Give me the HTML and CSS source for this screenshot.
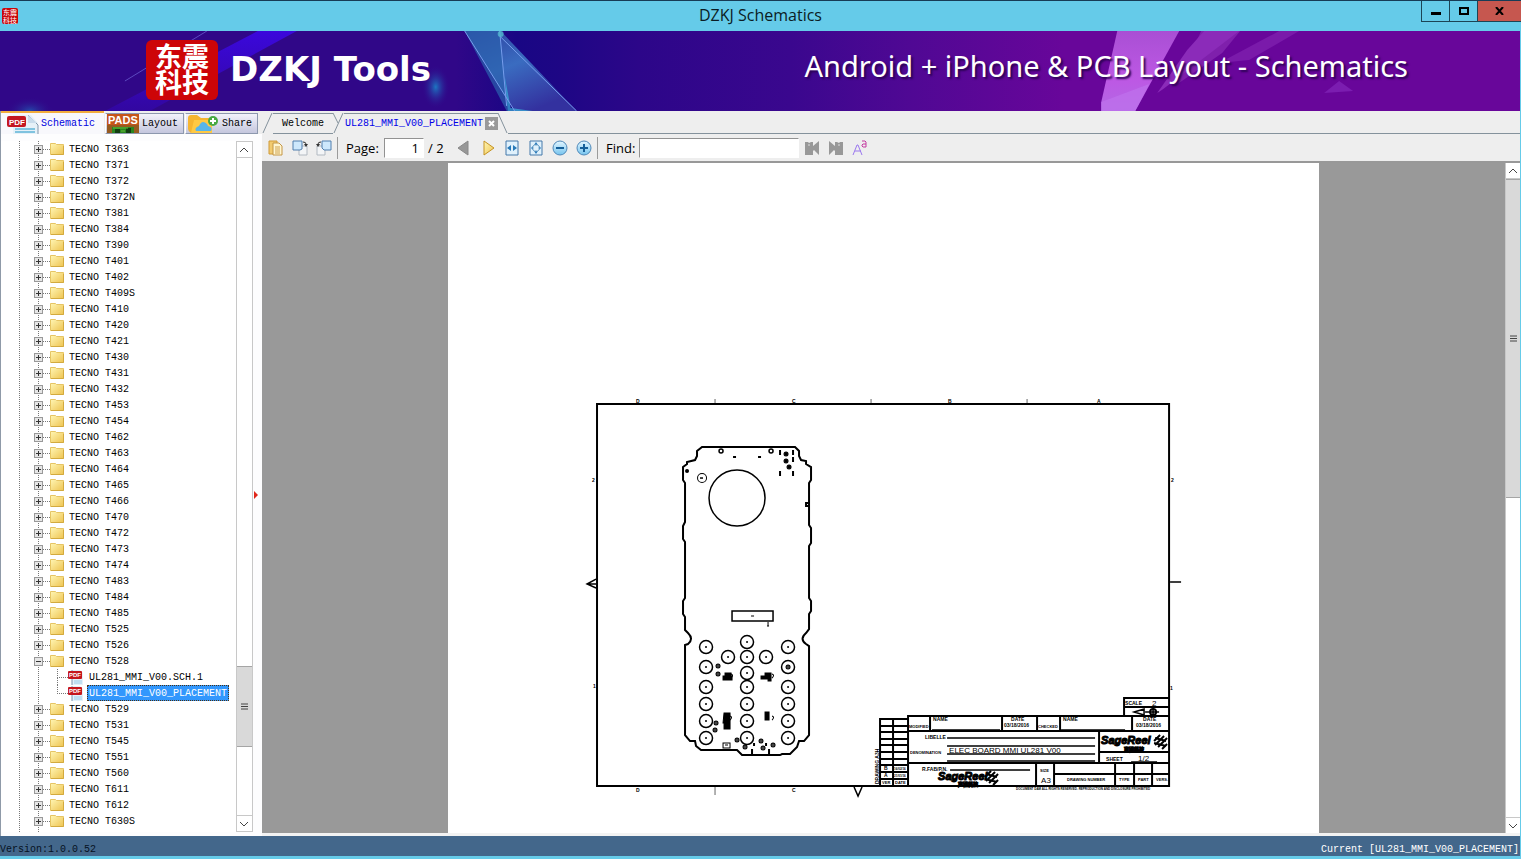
FILE: index.html
```html
<!DOCTYPE html>
<html lang="en">
<head>
    <meta charset="UTF-8">
    <meta name="viewport" content="width=device-width, initial-scale=1.0">
    <title>DZKJ Schematics</title>
    <link rel="stylesheet" href="styles.css">
</head>
<body>
    <!-- Shared icons -->
    <svg class="sprite" aria-hidden="true">
        <defs>
            <linearGradient id="gold" x2="1" y2="1"><stop offset="0" stop-color="#fff6b4"/><stop offset="1" stop-color="#eec452"/></linearGradient>
            <linearGradient id="ball" x2="0" y2="1"><stop offset="0" stop-color="#e4f6ff"/><stop offset="1" stop-color="#74c3ee"/></linearGradient>
        </defs>
        <symbol id="folder" viewBox="0 0 14 13">
            <path d="M.5 .5h5l1 1h7v10H.5z" fill="url(#gold)" stroke="#e6c564"/>
            <path d="M1 11.5h12.5V3" fill="none" stroke="#d3aa3e"/>
        </symbol>
    </svg>

    <header class="title-bar">
        <span class="app-icon"><span>东震</span><span>科技</span></span>
        <h1>DZKJ Schematics</h1>
        <div class="window-buttons">
            <button aria-label="Minimize"><svg width="10" height="10"><path d="M0 6h10v3H0z"/></svg></button>
            <button aria-label="Maximize"><svg width="10" height="8"><path d="M1 1h8v6H1z" fill="none" stroke="#000" stroke-width="2"/></svg></button>
            <button class="close" aria-label="Close"><svg width="9" height="8"><path d="M1 0l7 8M8 0L1 8" stroke="#000" stroke-width="2"/></svg></button>
        </div>
    </header>

    <section class="banner">
        <svg class="banner-art" viewBox="0 0 1521 80" preserveAspectRatio="none" aria-hidden="true">
            <defs>
                <linearGradient id="sky"><stop offset="0" stop-color="#300788"/><stop offset=".3" stop-color="#300788"/><stop offset=".34" stop-color="#190684"/><stop offset=".37" stop-color="#1e0685"/><stop offset=".42" stop-color="#2c0689"/><stop offset=".52" stop-color="#3a078e"/><stop offset=".6" stop-color="#500894"/><stop offset=".7" stop-color="#68069a"/><stop offset="1" stop-color="#68069a"/></linearGradient>
                <linearGradient id="beam" x2="0" y2="1"><stop offset="0" stop-color="#3b08dc"/><stop offset="1" stop-color="#3207a0"/></linearGradient>
                <linearGradient id="facet" x2=".6" y2="1"><stop offset="0" stop-color="#2c3f9f"/><stop offset=".5" stop-color="#3a6cc0"/><stop offset="1" stop-color="#33319f"/></linearGradient>
                <linearGradient id="pink" x2="0" y2="1"><stop offset="0" stop-color="#a94fd4"/><stop offset=".6" stop-color="#bd58e4"/><stop offset="1" stop-color="#b368e4"/></linearGradient>
                <radialGradient id="glow"><stop offset="0" stop-color="#1d76c2"/><stop offset="1" stop-color="#300788" stop-opacity="0"/></radialGradient>
            </defs>
            <rect width="1521" height="80" fill="url(#sky)"/>
            <path d="M258 0h39L150 80h-45z" fill="url(#beam)"/>
            <path d="M207 0L125 50" stroke="#5c4ac0"/>
            <ellipse cx="436" cy="56" rx="14" ry="22" fill="url(#glow)"/>
            <ellipse cx="30" cy="80" rx="24" ry="14" fill="url(#glow)" opacity=".6"/>
            <path d="M465 0h36l76 80h-62z" fill="url(#facet)"/>
            <path d="M500 0l8 80h-1L465 0z" fill="#2b62ae" opacity=".7"/>
            <path d="M505 45l6 32 22 3h-25z" fill="#3ab3da" opacity=".7"/>
            <path d="M465 0l50 80M500 0l7 75M500 5l77 75" stroke="#759dec" fill="none"/>
            <circle cx="501" cy="3" r="3" fill="#52b9d0" opacity=".8"/>
            <path d="M1202 0h39l-18 22-46 32z" fill="#7f20ac"/>
            <path d="M1280 0h20l-50 29-30 3z" fill="#7a1aaa"/>
            <path d="M1205 0h35l-76 58-6 4 30-43z" fill="#8b2bb9"/>
            <path d="M1118 0h62l-44 80h-34v-9z" fill="url(#pink)"/>
            <path d="M1136 80l14-27-48 18v9z" fill="#bf72ec" opacity=".7"/>
            <path d="M1325 62l15-12 14 10z" fill="#7b1db0"/>
        </svg>
        <div class="logo"><span>东震</span><span>科技</span></div>
        <strong class="brand">DZKJ Tools</strong>
        <p class="slogan">Android + iPhone &amp; PCB Layout - Schematics</p>
    </section>

    <main class="workspace">
        <aside class="sidebar">
            <nav class="side-tabs">
                <button class="side-tab active">
                    <svg width="34" height="20" viewBox="0 0 34 20" aria-hidden="true">
                        <path d="M7 1h18l7 8v11H7z" fill="#e6f1f8"/><path d="M22 1l10 10v9" fill="none" stroke="#8196aa"/>
                        <path d="M22 1v8h9z" fill="#c9dceb"/><path d="M9 15h20M9 18h20" stroke="#80c3df" stroke-width="2"/>
                        <rect x="1" y="2" width="19" height="11" rx="2" fill="#c41620"/><text x="3" y="11" class="pdf-mark big">PDF</text>
                    </svg>
                    Schematic
                </button>
                <button class="side-tab">
                    <svg width="32" height="19" viewBox="0 0 32 19" aria-hidden="true">
                        <path d="M0 0h32v19H0z" fill="#c65519"/><path d="M0 11h32v8H0z" fill="#965a20"/>
                        <path d="M5 13h22v6H5z" fill="#29851f"/><path d="M8 15h5v4H8zM19 14h5v5h-5z" fill="#123d10"/><path d="M6 14h15M14 17h4" stroke="#66bc3c"/>
                        <text x="1" y="10" class="pads-mark">PADS</text>
                    </svg>
                    Layout
                </button>
                <button class="side-tab">
                    <svg width="32" height="19" viewBox="0 0 32 19" aria-hidden="true">
                        <path d="M1 4q0-3 3-3h6l4 3h11v15H4q-3-2-3-4z" fill="#f6b530"/><path d="M7 6h18v13H4z" fill="#ffc943"/>
                        <path d="M9 17q-2-3 3-5 3-7 8-2l1 2q5 1 3 5z" fill="#57b5eb"/>
                        <circle cx="26" cy="7" r="5" fill="#48a942"/><path d="M23 7h6M26 4v6" stroke="#fff" stroke-width="2"/>
                    </svg>
                    Share
                </button>
            </nav>
            <div class="side-body">
                <ul class="tree" id="tree">
                    <!-- filled by the script -->
                </ul>
                <div class="scrollbar tree-scroll">
                    <button aria-label="Scroll up"><svg width="9" height="6"><path d="M0 5l4-4 4 4" class="chevron"/></svg></button>
                    <div class="track"><div class="thumb"><svg width="7" height="7"><path d="M0 1h7M0 3.500h7M0 6h7" class="grip"/></svg></div></div>
                    <button aria-label="Scroll down"><svg width="9" height="6"><path d="M0 1l4 4 4-4" class="chevron"/></svg></button>
                </div>
                <div class="splitter"><svg width="4" height="8"><path d="M0 0l4 4-4 4z" fill="#e0261a"/></svg></div>
            </div>
        </aside>

        <section class="content">
            <nav class="doc-tabs">
                <svg width="11" height="21" aria-hidden="true"><path d="M1 20L10 0" class="tab-edge"/></svg>
                <button class="doc-tab">Welcome</button>
                <svg width="11" height="21" aria-hidden="true"><path d="M0 0l5 10M1 20L10 0" class="tab-edge"/></svg>
                <div class="doc-tab active">
                    <button>UL281_MMI_V00_PLACEMENT</button>
                    <button class="tab-close" aria-label="Close tab"><svg width="7" height="7"><path d="M1 1l5 5M6 1L1 6" stroke="#fff" stroke-width="2"/></svg></button>
                </div>
                <svg width="10" height="21" aria-hidden="true"><path d="M0 0l9 20" class="tab-edge"/></svg>
                <span class="tabs-rest"></span>
            </nav>

            <div class="toolbar">
                <button class="tool" aria-label="Open"><svg width="16" height="16"><path d="M1 1h8v13H1z" fill="#f2cb70" stroke="#cf9a38"/><path d="M5 3h6l3 3v9H5z" fill="#fff6d2" stroke="#c49645"/><path d="M7 7h5M7 9h5M7 11h5M7 13h5" stroke="#cfa24e"/></svg></button>
                <button class="tool" aria-label="Rotate right"><svg width="16" height="16"><path d="M7 6h8v9H7z" fill="#f3f5f7" stroke="#b2b9c1"/><path d="M1 1h9v8l-2 1H1z" fill="#cde8fc" stroke="#517fae"/><path d="M11 2q3 0 3 2" fill="none" stroke="#333"/><path d="M12 4h4l-2 3z" fill="#333"/></svg></button>
                <button class="tool" aria-label="Rotate left"><svg width="16" height="16"><path d="M1 6h8v9H1z" fill="#f3f5f7" stroke="#b2b9c1"/><path d="M6 1h9v9H8L6 8z" fill="#cde8fc" stroke="#517fae"/><path d="M5 2Q2 2 2 4" fill="none" stroke="#333"/><path d="M0 4h4L2 7z" fill="#333"/></svg></button>
                <span class="divider"></span>
                <label for="page-input" class="page-label">Page:</label>
                <input type="text" id="page-input" value="1">
                <span class="page-total">/ 2</span>
                <button class="tool" aria-label="Previous page"><svg width="16" height="16"><path d="M12 1v14L2 8z" fill="#979797" stroke="#888"/></svg></button>
                <button class="tool" aria-label="Next page"><svg width="16" height="16"><path d="M4 1v14l10-7z" fill="url(#gold)" stroke="#c59324"/></svg></button>
                <button class="tool" aria-label="Fit width"><svg width="14" height="16"><path d="M1 1h12v14H1z" fill="#e0f1fc" stroke="#4578aa"/><path d="M6 5v6L2 8zM8 5v6l4-3z" fill="#2879b8"/></svg></button>
                <button class="tool" aria-label="Fit page"><svg width="14" height="16"><path d="M1 1h12v14H1z" fill="#e0f1fc" stroke="#4578aa"/><path d="M7 2l2 3H5zM7 14l2-3H5zM2 8l2-2v4zM12 8l-2-2v4z" fill="#2879b8"/><path d="M4 6l1-1h4l1 1v4l-1 1H5l-1-1z" fill="none" stroke="#7ba9cc"/></svg></button>
                <button class="tool" aria-label="Zoom out"><svg width="16" height="16"><circle cx="8" cy="8" r="7" fill="url(#ball)" stroke="#5089b9"/><path d="M4 8h8" stroke="#155f99" stroke-width="2"/></svg></button>
                <button class="tool" aria-label="Zoom in"><svg width="16" height="16"><circle cx="8" cy="8" r="7" fill="url(#ball)" stroke="#5089b9"/><path d="M4 8h8M8 4v8" stroke="#155f99" stroke-width="2"/></svg></button>
                <span class="divider"></span>
                <label for="find-input" class="find-label">Find:</label>
                <input type="text" id="find-input">
                <button class="tool" aria-label="Find previous"><svg width="16" height="16"><path d="M1 2h3l1 1 2-1h2v4l6-5v14l-5-5-1 1v4H1z" fill="#989898"/><path d="M4 5h2" stroke="#ddd"/></svg></button>
                <button class="tool" aria-label="Find next"><svg width="16" height="16"><path d="M15 2h-3l-1 1-2-1H7v4L1 1v14l5-5 1 1v4h8z" fill="#989898"/><path d="M10 5h2" stroke="#ddd"/></svg></button>
                <button class="tool" aria-label="Match case"><svg width="16" height="16"><path d="M1 15L5 5h1l4 10M3 11h6" fill="none" stroke="#9b78ee"/><path d="M10 1h3l1 1v5M14 4h-3l-1 1v1l1 1h3" fill="none" stroke="#c43aa0"/></svg></button>
            </div>

            <div class="viewer">
                <div class="canvas">
                    <div class="sheet">
                        <!-- Placement drawing, sheet 1 -->
                        <svg class="drawing" viewBox="448 163 870 671" id="drawing">
                            <!-- frame -->
                            <path d="M597 404h572v382H597z" stroke-width="2"/>
                            <path d="M715 399v4M871 399v4M1027 399v4M715 787v8" stroke="#666"/>
                            <path d="M596 579l-9 5 9 4M587 584h9M1170 582h11M854 787l4 9 4-9" stroke-width="1.500"/>
                            <g class="zone">
                                <text x="636" y="403">D</text><text x="792" y="403">C</text><text x="948" y="403">B</text><text x="1097" y="403">A</text>
                                <text x="636" y="792">D</text><text x="792" y="792">C</text>
                                <text x="592" y="482">2</text><text x="593" y="688">1</text><text x="1171" y="482">2</text><text x="1170" y="690">1</text>
                            </g>
                            <!-- board outline -->
                            <path stroke-width="2" d="M702 447H795L799 451V456L801 460L806 461V464L811 467V480L809 483V525L811 528V543L809 546V598L811 601V611L809 614V629L806 633Q799 639 806 644L809 646V735L804 741H799L797 747L790 754H782L780 755H742L737 750H701L696 746L695 741H690L685 735V645L688 644Q694 639 688 633L685 630V617L683 614V601L685 598V542L683 539V526L685 522V483L683 480V467L687 464V462L695 460L697 456V451Z"/>
                            <path d="M809 503h-3v3h3" stroke-width="2"/>
                            <circle cx="737" cy="498" r="28" stroke-width="1.500"/>
                            <circle cx="702" cy="478" r="4.500"/><path d="M700 478h3" stroke-width="1.500"/>
                            <circle cx="721" cy="451" r="2" stroke-width="1.500"/><circle cx="771" cy="451" r="2" stroke-width="1.500"/>
                            <circle cx="687" cy="471" r="1" stroke-width="2"/>
                            <path d="M733 457h3M758 457h3" stroke-width="2"/>
                            <path d="M780 450v5M793 450v5M793 457v5M780 471v5M793 471v5" stroke-width="2"/>
                            <g fill="#000"><circle cx="786" cy="454" r="2"/><circle cx="786" cy="461" r="2"/><circle cx="789" cy="467" r="2"/></g>
                            <path d="M732 611h41v10h-41z" stroke-width="1.500"/><path d="M751 616h3M768 622v4M767 626h2"/>
                            <!-- keys are added by the script -->
                            <g id="keys"></g>
                            <path d="M725 673h6v3h1v4h-9v-4h2zM765 673h6v8h-3v-2h-7v-3h4zM724 713h6v16h-6v-6h-1zM765 712h4v8h-4z" fill="#000"/>
                            <path d="M731 674q3 1 0 4M772 674q3 1 0 4M730 716q3 1 0 4M772 716q3 1 0 4M723 743h7v5h-7zM725 745h3"/>
                            <g class="vias"><circle cx="718" cy="666" r="2"/><circle cx="718" cy="674" r="2"/><circle cx="716" cy="723" r="2"/><circle cx="715" cy="730" r="2"/><circle cx="737" cy="740" r="2"/><circle cx="745" cy="747" r="2"/><circle cx="761" cy="741" r="2"/><circle cx="763" cy="748" r="2"/><circle cx="773" cy="745" r="2"/><circle cx="788" cy="667" r="2"/></g>
                            <path d="M752 749v5M769 749v5M754 743v3M766 743v3" stroke-width="2"/>

                            <!-- title block -->
                            <path stroke-width="2" d="M880 786v-67h28M893 719v67M908 786v-70h261M880 726h28M880 732h28M880 739h28M880 745h28M880 752h28M880 759h28M880 765h28M880 772h28M880 779h28M908 731h261M908 763h261M930 716v15M1002 716v15M1037 716v15M1060 716v15M1132 716v15M1099 731v32M1099 752h70M1036 763v23M1054 763v23M1054 774h115M1115 763v23M1134 763v23M1152 763v23M1124 716v-18h45M1124 707h45"/>
                            <path stroke-width="1.500" d="M932 730h68M1061 730h64M947 738h148M947 746h148M947 754h148M947 761h148M950 770h80M1131 762h26"/>
                            <path d="M1134 712l10-3v6zM1145 712h14M1153 707v9" stroke-width="1.500"/><circle cx="1153" cy="712" r="3" stroke-width="2"/>
                            <text class="sage" x="1101" y="744">SageReel</text>
                            <text class="sage small" x="1124" y="751">声锐科技</text>
                            <path class="sage-mark" d="M1154 741l6-6M1155 745l9-9M1158 747l9-9M1162 749l5-5M1155 738l11 3M1154 743l12 3"/>
                            <text class="sage" x="938" y="780">SageReel</text>
                            <text class="sage small" x="958" y="786">声锐科技</text>
                            <path class="sage-mark" d="M985 777l6-6M986 781l9-9M989 783l9-9M993 785l5-5M986 774l11 3M985 779l12 3"/>
                            <g class="tiny">
                                <text x="1125" y="705">SCALE</text><text x="933" y="721">NAME</text><text x="1063" y="721">NAME</text>
                                <text x="1011" y="721">DATE</text><text x="1143" y="721">DATE</text>
                                <text x="1004" y="727">03/18/2016</text><text x="1136" y="727">03/18/2016</text>
                                <text x="925" y="739">LIBELLE</text>
                                <text x="922" y="771">R.FAB/P.N.</text><text x="1106" y="761">SHEET</text>
                                <text x="884" y="770">B</text><text x="884" y="777">A</text>
                                <text transform="translate(879 784) rotate(-90)">DRAWING A3H</text>
                            </g>
                            <g class="tiny dense">
                                <text x="910" y="754">DENOMINATION</text><text x="882" y="784">VER</text><text x="895" y="784">DATE</text>
                                <text x="909" y="728">MODIFIED</text><text x="1038" y="728">CHECKED</text><text x="1040" y="772">SIZE</text>
                                <text x="1067" y="781">DRAWING NUMBER</text><text x="1119" y="781">TYPE</text><text x="1138" y="781">PART</text><text x="1156" y="781">VERS.</text>
                            </g>
                            <g class="tiny note">
                                <text x="894" y="770">16/02/16</text><text x="894" y="777">21/01/16</text>
                                <text x="1016" y="790">DOCUMENT DAM ALL RIGHTS RESERVED. REPRODUCTION AND DISCLOSURE PROHIBITED</text>
                            </g>
                            <g class="value"><text x="949" y="753">ELEC BOARD MMI UL281 V00</text><text x="1138" y="761">1/2</text><text x="1041" y="783">A3</text><text x="1152" y="706">2</text></g>
                        </svg>
                    </div>
                </div>
                <div class="scrollbar page-scroll">
                    <button aria-label="Scroll up"><svg width="9" height="6"><path d="M0 5l4-4 4 4" class="chevron"/></svg></button>
                    <div class="track"><div class="thumb"><svg width="7" height="7"><path d="M0 1h7M0 3.500h7M0 6h7" class="grip"/></svg></div></div>
                    <button aria-label="Scroll down"><svg width="9" height="6"><path d="M0 1l4 4 4-4" class="chevron"/></svg></button>
                </div>
            </div>
        </section>
    </main>

    <footer class="status-bar">
        <span>Version:1.0.0.52</span>
        <span class="current">Current [UL281_MMI_V00_PLACEMENT]</span>
    </footer>

    <script>
        const models = ["T363", "T371", "T372", "T372N", "T381", "T384", "T390", "T401", "T402", "T409S", "T410",
            "T420", "T421", "T430", "T431", "T432", "T453", "T454", "T462", "T463", "T464", "T465", "T466", "T470",
            "T472", "T473", "T474", "T483", "T484", "T485", "T525", "T526", "T528", "T529", "T531", "T545", "T551",
            "T560", "T611", "T612", "T630S"];
        // Files inside the open folder
        const files = { T528: ["UL281_MMI_V00.SCH.1", "UL281_MMI_V00_PLACEMENT"] };
        const current = "UL281_MMI_V00_PLACEMENT";
        const pdfIcon = `<svg class="pdf" viewBox="0 0 15 16" aria-hidden="true">
            <path d="M4 1h8l3 3v12H4z" fill="#e3f1fa"/><path d="M6 12h8M6 14h8" stroke="#9accea"/>
            <path d="M4 16V1" stroke="#7c94ae"/><rect y="2" width="14" height="8" rx="1" fill="#c5161d"/>
            <text x="1" y="8" class="pdf-mark">PDF</text></svg>`;

        function showTree() {
            let html = "";
            models.forEach(model => {
                const open = files[model];
                html += `<li><div class="node"><button class="expander${open ? " open" : ""}" aria-label="Toggle ${model}"></button>
                    <svg class="folder"><use href="#folder"/></svg><a href="#">TECNO ${model}</a></div>`;
                if (open) {
                    html += "<ul>" + open.map(file => `<li class="file">${pdfIcon}
                        <a href="#"${file === current ? ' class="selected"' : ""}>${file}</a></li>`).join("") + "</ul>";
                }
                html += "</li>";
            });
            document.getElementById("tree").innerHTML = html;
        }

        // Round keys of the keypad, column by column
        function drawKeys() {
            const columns = [
                [706, [647, 667, 687, 704, 721, 738]],
                [728, [657]],
                [747, [642, 657, 673, 687, 704, 721, 738]],
                [766, [657]],
                [788, [647, 667, 687, 704, 721, 738]]
            ];
            document.getElementById("keys").innerHTML = columns.map(([x, ys]) =>
                ys.map(y => `<circle cx="${x}" cy="${y}" r="6.500"/><circle cx="${x}" cy="${y}" r="1" class="dot"/>`).join("")
            ).join("");
        }

        showTree();
        drawKeys();
    </script>
</body>
</html>
```
FILE: styles.css
```css
*,
*::before,
*::after {
    box-sizing: border-box;
}
body {
    margin: 0;
    height: 100vh;
    display: flex;
    flex-direction: column;
    overflow: hidden;
    background-color: #65cbe9;
    border-bottom: 3px solid #65cbe9;
    font-family: "Liberation Mono", monospace;
    font-size: 10px;
    color: #000;
}
button {
    padding: 0;
    border: none;
    background: none;
    font: inherit;
    color: inherit;
}
a {
    color: inherit;
    text-decoration: none;
}
svg {
    display: block;
    flex-shrink: 0;
}
.sprite {
    position: absolute;
    width: 0;
    height: 0;
}

/* Title bar */
.title-bar {
    height: 31px;
    flex-shrink: 0;
    display: grid;
    grid-template-columns: 1fr auto 1fr;
    align-items: center;
    border-top: 1px solid #173c56;
}
.title-bar h1 {
    margin: 0;
    padding-bottom: 2px;
    font: 16px/26px "Open Sans", sans-serif;
    color: #0b1c24;
}
.app-icon {
    width: 16px;
    height: 16px;
    margin-left: 2px;
    border-radius: 2px;
    background-color: #c9060a;
    color: #fff;
    font: 7px/8px "Noto Sans CJK SC", sans-serif;
    text-align: center;
}
.app-icon span,
.logo span {
    display: block;
}
.window-buttons {
    display: flex;
    align-self: start;
    justify-self: end;
}
.window-buttons button {
    width: 28px;
    height: 21px;
    display: flex;
    align-items: center;
    justify-content: center;
    border: 1px solid #1c4455;
    border-top: none;
    border-right: none;
}
.window-buttons .close {
    width: 44px;
    background-color: #c6574f;
}

/* Banner */
.banner {
    position: relative;
    height: 80px;
    flex-shrink: 0;
    display: flex;
    align-items: center;
    padding: 0 112px 2px 146px;
    margin-right: 1px;
    color: #fff;
    background-color: #300788;
}
.banner-art {
    position: absolute;
    inset: 0;
    width: 100%;
    height: 100%;
}
.logo,
.brand,
.slogan {
    position: relative;
}
.logo {
    width: 72px;
    height: 60px;
    padding: 3px 0;
    border-radius: 6px;
    background-color: #cd0508;
    font: bold 27px/26px "Noto Sans CJK SC", sans-serif;
    text-align: center;
}
.brand {
    margin: 0 0 2px 12px;
    font: bold 34px/40px "DejaVu Sans", sans-serif;
}
.slogan {
    margin: 0 0 8px auto;
    font: 29px/36px "Noto Sans", sans-serif;
    text-shadow: 2px 2px 2px #2c0355;
}

/* Workspace */
.workspace {
    flex: 1;
    min-height: 0;
    display: flex;
    margin-right: 1px;
    background-color: #eee;
}
.sidebar {
    width: 262px;
    flex-shrink: 0;
    display: flex;
    flex-direction: column;
    border-left: 1px solid #8f9aa8;
    background-color: #f8f8fc;
}
.side-tabs {
    height: 23px;
    flex-shrink: 0;
    display: flex;
    align-items: flex-end;
    gap: 1px;
    background-color: #eee;
}
.side-tab {
    height: 21px;
    display: flex;
    align-items: center;
    gap: 3px;
    padding: 0 5px 0 1px;
    border: 1px solid #8d98ae;
    border-left-color: #fff;
    background-image: linear-gradient(#f2f2fa, #c5c7de);
}
.side-tab.active {
    height: 23px;
    gap: 1px;
    padding: 0 9px 0 5px;
    border: none;
    border-top: 2px solid #f2ad3d;
    background: #f8f8fc;
    color: #0000e0;
}
.side-body {
    flex: 1;
    min-height: 0;
    display: flex;
    padding: 7px 1px 4px 0;
    background-color: #fdfdfe;
}

/* Tree */
.tree,
.tree ul {
    margin: 0;
    padding: 0;
    list-style: none;
}
.tree {
    position: relative;
    flex: 1;
    overflow: hidden;
    background-color: #fff;
}
.tree::before {
    content: '';
    position: absolute;
    left: 18px;
    top: 0;
    width: 20px;
    height: 100%;
    border: 1px dotted #777;
    border-width: 0 1px;
}
.node,
.file {
    position: relative;
    height: 16px;
    display: flex;
    align-items: center;
}
.node {
    padding-left: 33px;
}
.expander {
    position: relative;
    width: 9px;
    height: 9px;
    border: 1px solid #999;
    background: linear-gradient(#333, #333) center / 5px 1px no-repeat,
        linear-gradient(#333, #333) center / 1px 5px no-repeat, #e6e6e6;
}
.expander.open {
    background: linear-gradient(#333, #333) center / 5px 1px no-repeat, #e6e6e6;
}
.node::before {
    content: '';
    order: 1;
    width: 7px;
    border-top: 1px dotted #777;
}
.folder {
    order: 2;
    width: 14px;
    height: 13px;
}
.node a {
    order: 3;
    margin-left: 5px;
}
.file {
    padding-left: 67px;
}
.file::before {
    content: '';
    position: absolute;
    left: 56px;
    top: 0;
    width: 11px;
    height: 9px;
    border: 1px dotted #777;
    border-width: 0 0 1px 1px;
}
.file:first-child::after {
    content: '';
    position: absolute;
    left: 56px;
    top: 8px;
    height: 8px;
    border-left: 1px dotted #777;
}
.pdf {
    width: 15px;
    height: 16px;
}
.file a {
    margin-left: 4px;
    padding: 1px 1px 0;
    border: 1px solid transparent;
    line-height: 13px;
}
.file a.selected {
    color: #fff;
    background-color: #3297fd;
    border: 1px dotted #4a3114;
}
.pdf-mark {
    font: bold 6px "Liberation Sans", sans-serif;
    fill: #fff;
}
.pdf-mark.big {
    font-size: 8px;
}
.pads-mark {
    font: bold 11px "Liberation Sans", sans-serif;
    fill: #fff;
}

/* Scrollbars */
.scrollbar {
    display: flex;
    flex-direction: column;
    background-color: #fff;
    border: 1px solid #c8c8c8;
}
.scrollbar button {
    height: 15px;
    display: flex;
    align-items: center;
    justify-content: center;
    flex-shrink: 0;
}
.track {
    flex: 1;
    display: flex;
    flex-direction: column;
    border: 1px solid #c8c8c8;
    border-width: 1px 0;
}
.thumb {
    display: flex;
    align-items: center;
    justify-content: center;
    background-color: #d9d9d9;
    border: 1px solid #a5a5a5;
    border-width: 1px 0;
}
.tree-scroll {
    width: 17px;
}
.tree-scroll .thumb {
    height: 81px;
    margin-top: auto;
    margin-bottom: 68px;
}
.page-scroll {
    width: 15px;
    border-width: 0 0 0 1px;
}
.page-scroll .thumb {
    height: 50%;
}
.chevron {
    fill: none;
    stroke: #444;
}
.grip {
    stroke: #444;
}
.splitter {
    width: 8px;
    display: flex;
    align-items: center;
    padding: 17px 0 0 1px;
}

/* Documents */
.content {
    flex: 1;
    min-width: 0;
    display: flex;
    flex-direction: column;
}
.doc-tabs {
    height: 23px;
    flex-shrink: 0;
    display: flex;
    align-items: flex-end;
    background-color: #eee;
}
.tab-edge {
    fill: none;
    stroke: #84929c;
}
.doc-tab {
    height: 21px;
    display: flex;
    align-items: center;
    border: 1px solid #84929c;
    border-width: 1px 0;
    padding: 0 9px;
    line-height: 20px;
}
.doc-tab.active {
    padding: 0 0 0 1px;
    gap: 2px;
    border-bottom-color: #eee;
    color: #0000e8;
}
.tab-close {
    width: 13px;
    height: 13px;
    display: flex;
    align-items: center;
    justify-content: center;
    background-color: #999;
}
.tabs-rest {
    flex: 1;
    border-bottom: 1px solid #84929c;
}
.toolbar {
    height: 29px;
    flex-shrink: 0;
    display: flex;
    align-items: center;
    padding: 1px 0 0 2px;
    border-bottom: 2px solid #989898;
    font: 13px "Open Sans", sans-serif;
}
.tool {
    width: 24px;
    height: 24px;
    display: flex;
    align-items: center;
    justify-content: center;
}
.divider {
    width: 1px;
    height: 22px;
    margin: 0 0 0 1px;
    background-color: #9b9b9b;
}
.toolbar label {
    margin-left: 8px;
}
.page-label {
    width: 38px;
}
.find-label {
    width: 33px;
}
.toolbar input {
    height: 20px;
    padding: 0 4px;
    border: 1px solid #fff;
    border-color: #929292 #fff #fff #929292;
    font: inherit;
}
#page-input {
    width: 40px;
    text-align: right;
}
#find-input {
    width: 160px;
    margin-right: 1px;
}
.page-total {
    width: 28px;
    padding-left: 4px;
}
.viewer {
    flex: 1;
    min-height: 0;
    display: flex;
    border-bottom: 3px solid #f3f3f3;
}
.canvas {
    flex: 1;
    min-width: 0;
    display: flex;
    justify-content: center;
    overflow: hidden;
    background-color: #999;
}
.sheet {
    width: 70%;
    background-color: #fff;
}

/* Drawing */
.drawing {
    width: 100%;
    height: auto;
    fill: none;
    stroke: #000;
}
.drawing text {
    fill: #000;
    stroke: none;
}
.drawing .dot {
    fill: #000;
    stroke: none;
}
#keys {
    stroke-width: 1.5;
}
.vias {
    fill: #444;
}
.zone,
.tiny {
    font: bold 5px "Liberation Sans", sans-serif;
}
.tiny.dense {
    font-size: 4px;
}
.tiny.note {
    font-size: 3px;
}
.value {
    font: 8px "Liberation Sans", sans-serif;
}
.sage {
    font: italic bold 11px "Liberation Sans", sans-serif;
}
.drawing .sage {
    stroke: #000;
}
.sage.small {
    font: bold 5px "Noto Sans CJK SC", sans-serif;
}
.sage-mark {
    stroke-width: 2;
}

/* Status bar */
.status-bar {
    height: 20px;
    flex-shrink: 0;
    display: flex;
    justify-content: space-between;
    align-items: flex-end;
    padding: 0 1px 1px 0;
    margin-right: 1px;
    background-color: #43678b;
    color: #06121f;
}
.status-bar .current {
    color: #fff;
}
```
